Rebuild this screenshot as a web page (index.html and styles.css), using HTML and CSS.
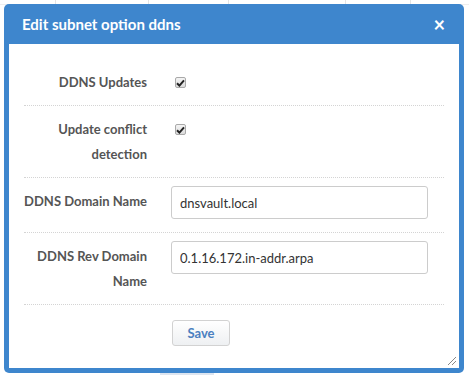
FILE: index.html
```html
<!DOCTYPE html>
<html lang="en">
<head>
    <meta charset="UTF-8">
    <meta name="viewport" content="width=device-width, initial-scale=1.0">
    <title>Edit subnet option ddns</title>
    <link rel="stylesheet" href="styles.css">
</head>
<body>
    <!-- Tabela ao fundo (quase toda escondida pelo diálogo) -->
    <div class="backdrop">
        <span class="cell" style="width: 52px"></span>
        <span class="cell" style="width: 93px"></span>
        <span class="cell" style="width: 80px"></span>
        <span class="cell" style="width: 117px"></span>
        <span class="cell" style="width: 65px"></span>
    </div>

    <div class="dialog">
        <div class="dialog-header">
            <span class="dialog-title">Edit subnet option ddns</span>
            <span class="dialog-close">&times;</span>
        </div>
        <div class="dialog-body">
            <div class="form-row">
                <label class="form-label">DDNS Updates</label>
                <div class="form-control">
                    <span class="check">
                        <svg width="9" height="8" viewBox="0 0 9 8"><path d="M1 4.2 L3.4 6.6 L8 1.4" fill="none" stroke="#222" stroke-width="2"/></svg>
                    </span>
                </div>
            </div>
            <div class="form-row">
                <label class="form-label">Update conflict detection</label>
                <div class="form-control">
                    <span class="check">
                        <svg width="9" height="8" viewBox="0 0 9 8"><path d="M1 4.2 L3.4 6.6 L8 1.4" fill="none" stroke="#222" stroke-width="2"/></svg>
                    </span>
                </div>
            </div>
            <div class="form-row form-row-field">
                <label class="form-label">DDNS Domain Name</label>
                <div class="form-control">
                    <input type="text" class="text-input" value="dnsvault.local">
                </div>
            </div>
            <div class="form-row">
                <label class="form-label">DDNS Rev Domain Name</label>
                <div class="form-control">
                    <input type="text" class="text-input" value="0.1.16.172.in-addr.arpa">
                </div>
            </div>
            <div class="form-actions">
                <button class="btn-save">Save</button>
            </div>
            <span class="grip"></span>
        </div>
    </div>
    <div class="under-bar"></div>
</body>
</html>
```

FILE: styles.css
```css
/* Reset */
* {
    margin: 0;
    padding: 0;
    box-sizing: border-box;
}

body {
    font-family: Lato, "Open Sans", Arial, sans-serif;
    background-color: #fff;
    color: #333;
    width: 469px;
    height: 375px;
    overflow: hidden;
}

/* Fundo */
.backdrop {
    display: flex;
    height: 5px;
    border-bottom: 1px solid #eee;
    padding-left: 4px;
}

.cell {
    height: 100%;
    border-right: 1px solid #e4e4e4;
}

/* Diálogo */
.dialog {
    width: 460px;
    margin: -1px 0 0 4px;
    background-color: #3e86cd;
    border-radius: 5px;
    padding: 0 5px 5px;
}

.dialog-header {
    height: 40px;
    display: flex;
    align-items: center;
    justify-content: space-between;
    padding: 0 14px 0 13px;
    color: #fff;
}

.dialog-title {
    font-size: 15px;
    font-weight: bold;
}

.dialog-close {
    font-size: 20px;
    font-weight: bold;
    line-height: 1;
}

.dialog-body {
    position: relative;
    background: #fff;
    padding: 15px 15px 22px;
}

/* Linhas do formulário */
.form-row {
    display: flex;
    padding: 8px 0 10px;
    border-bottom: 1px dotted #d4d4d4;
}

.form-row-field {
    padding-bottom: 13px;
}

.form-label {
    width: 123px;
    padding-top: 3px;
    text-align: right;
    font-size: 13px;
    font-weight: bold;
    line-height: 25px;
    color: #555;
}

.form-control {
    padding-left: 24px;
}

.check {
    display: flex;
    align-items: center;
    justify-content: center;
    width: 11px;
    height: 11px;
    margin: 10px 0 0 4px;
    border: 1px solid #a9a9a9;
    border-radius: 2px;
    background: linear-gradient(#f4f4f4, #dcdcdc);
}

.text-input {
    width: 257px;
    height: 33px;
    padding: 0 8px;
    border: 1px solid #ccc;
    border-radius: 3px;
    font-family: inherit;
    font-size: 13px;
    color: #333;
}

/* Botão */
.form-actions {
    padding: 15px 0 0 148px;
}

.btn-save {
    width: 58px;
    height: 26px;
    border: 1px solid #d2d2d2;
    border-radius: 3px;
    background: linear-gradient(#fff, #eef0f2);
    color: #4b80c0;
    font-family: inherit;
    font-size: 13px;
    font-weight: bold;
}

.grip {
    position: absolute;
    right: 3px;
    bottom: 3px;
    width: 10px;
    height: 10px;
    background: repeating-linear-gradient(135deg, transparent 0 2px, #888 2px 3px);
    clip-path: polygon(100% 0, 100% 100%, 0 100%);
}

.under-bar {
    width: 54px;
    height: 2px;
    margin-left: 160px;
    background: #dde5f0;
}
```
